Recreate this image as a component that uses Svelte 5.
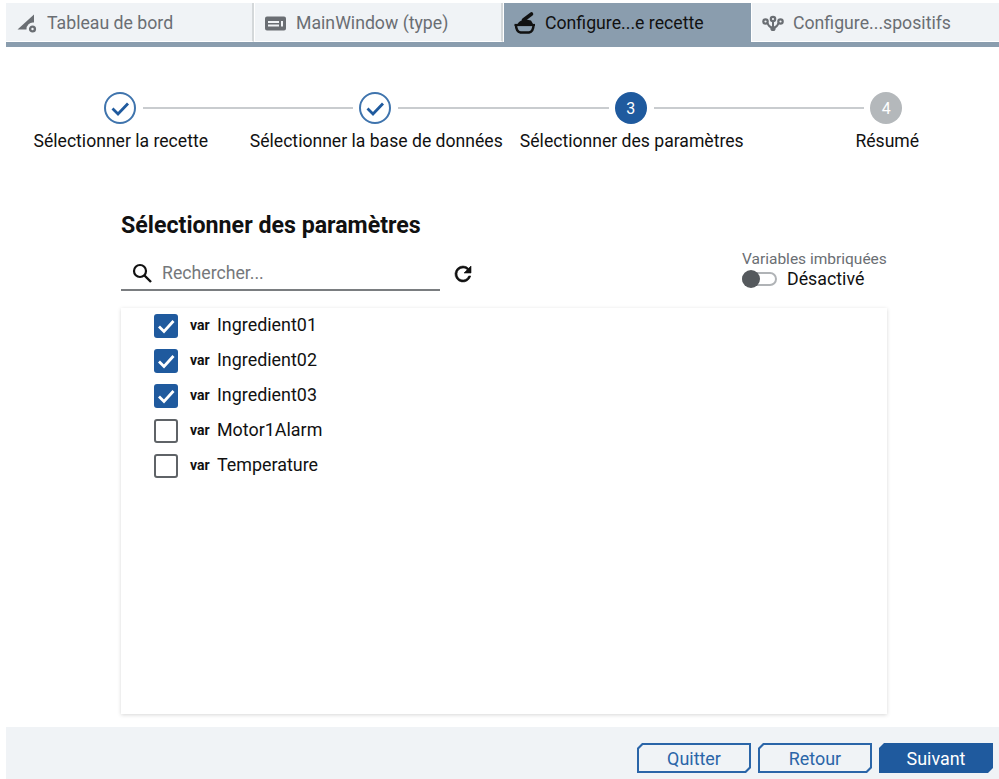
<script>
  const tabs = [
    { label: 'Tableau de bord', icon: 'dash' },
    { label: 'MainWindow (type)', icon: 'win' },
    { label: 'Configure...e recette', icon: 'bowl', active: true },
    { label: 'Configure...spositifs', icon: 'net' }
  ];
  const steps = [
    { label: 'Sélectionner la recette', state: 'done' },
    { label: 'Sélectionner la base de données', state: 'done' },
    { label: 'Sélectionner des paramètres', state: 'current', n: 3 },
    { label: 'Résumé', state: 'todo', n: 4 }
  ];
  const vars = [
    { name: 'Ingredient01', on: true },
    { name: 'Ingredient02', on: true },
    { name: 'Ingredient03', on: true },
    { name: 'Motor1Alarm', on: false },
    { name: 'Temperature', on: false }
  ];
</script>

<div class="root">
  <div class="tabs">
    {#each tabs as t}
      <div class="tab" class:active={t.active}>
        <svg class="tabicon" viewBox="0 0 24 24" width="24" height="24">
          {#if t.icon === 'dash'}
            <path d="M1.5 18.5 L18 3.5 V11.5 A6.5 6.5 0 0 0 10.5 18.5 Z" fill="currentColor" />
            <circle cx="16.5" cy="18" r="2.4" fill="none" stroke="currentColor" stroke-width="2.4" />
          {:else if t.icon === 'win'}
            <path fill-rule="evenodd" fill="currentColor" d="M2 5.5 H19 Q21 5.5 21 7.5 V17.5 Q21 19.5 19 19.5 H2 Q0 19.5 0 17.5 V7.5 Q0 5.5 2 5.5 Z M3 10 V12 H14 V10 Z M3 13.5 V15.5 H14 V13.5 Z M16 10 V15.5 H18 V10 Z" />
          {:else if t.icon === 'bowl'}
            <path d="M9.5 9 L17.5 3" stroke="currentColor" stroke-width="3.6" stroke-linecap="round" fill="none" />
            <path d="M3.5 13 Q6 8.5 12 8.5 L17 9.5 L19 13 Z" fill="currentColor" />
            <path d="M0.5 14 H21" stroke="currentColor" stroke-width="2.2" fill="none" />
            <path d="M2 14 Q2 20.5 6.5 21.5 H15 Q19.5 20.5 19.5 14" fill="none" stroke="currentColor" stroke-width="2.4" />
          {:else}
            <circle cx="11" cy="8" r="2.2" fill="none" stroke="currentColor" stroke-width="2.2" />
            <circle cx="3.5" cy="10.5" r="2.2" fill="none" stroke="currentColor" stroke-width="2.2" />
            <circle cx="18.5" cy="10.5" r="2.2" fill="none" stroke="currentColor" stroke-width="2.2" />
            <circle cx="11" cy="17.5" r="2.6" fill="currentColor" />
            <path d="M11 10 V16 M5.5 12 Q6.5 15.5 9.5 16.5 M16.5 12 Q15.5 15.5 12.5 16.5" fill="none" stroke="currentColor" stroke-width="2" />
          {/if}
        </svg>
        <span>{t.label}</span>
      </div>
    {/each}
  </div>

  <div class="stepper">
    {#each steps as s, i}
      <div class="step">
        <div class="head">
          <div class="line left" class:none={i === 0}></div>
          <div class="dot {s.state}">
            {#if s.state === 'done'}
              <svg viewBox="0 0 32 32" width="32" height="32">
                <path d="M8.5 16.5 L14 22 L24 11.5" fill="none" stroke="#1f5a9e" stroke-width="2.8" />
              </svg>
            {:else}
              {s.n}
            {/if}
          </div>
          <div class="line right" class:none={i === steps.length - 1}></div>
        </div>
        <div class="steplabel">{s.label}</div>
      </div>
    {/each}
  </div>

  <div class="content">
    <h2>Sélectionner des paramètres</h2>
    <div class="tools">
      <div class="search">
        <svg viewBox="0 0 24 24" width="24" height="24">
          <circle cx="10" cy="10" r="6" fill="none" stroke="#111" stroke-width="2.2" />
          <path d="M14.5 14.5 L21 21" stroke="#111" stroke-width="2.4" />
        </svg>
        <span>Rechercher...</span>
      </div>
      <svg class="refresh" viewBox="0 0 24 24" width="24" height="24">
        <path fill="#111" stroke="#111" stroke-width="0.6" d="M17.65 6.35A7.96 7.96 0 0 0 12 4a8 8 0 1 0 7.73 10h-2.08A6 6 0 1 1 12 6c1.66 0 3.14.69 4.22 1.78L13 11h7V4z" />
      </svg>
      <div class="nested">
        <div class="nestedtitle">Variables imbriquées</div>
        <div class="togglerow">
          <div class="toggle"><div class="knob"></div></div>
          <span>Désactivé</span>
        </div>
      </div>
    </div>

    <div class="panel">
      {#each vars as v}
        <div class="row">
          <div class="check" class:on={v.on}>
            {#if v.on}
              <svg viewBox="0 0 24 24" width="24" height="24">
                <path d="M5 12.5 L10 17.5 L19.5 7" fill="none" stroke="#fff" stroke-width="2.8" />
              </svg>
            {/if}
          </div>
          <span class="kind">var</span>
          <span class="name">{v.name}</span>
        </div>
      {/each}
    </div>
  </div>

  <div class="footer">
    <button class="btn">Quitter</button>
    <button class="btn">Retour</button>
    <button class="btn primary">Suivant</button>
  </div>
</div>

<style>
  :global(body) { background: #fff; }

  .root {
    width: 999px;
    height: 779px;
    overflow: hidden;
    display: flex;
    flex-direction: column;
    font-family: Roboto, "Liberation Sans", sans-serif;
    color: #111;
  }

  .tabs {
    display: flex;
    margin: 3px 0 0 6px;
    height: 39px;
    border-bottom: 5px solid #8a9dae;
    flex: none;
  }
  .tab {
    width: 248px;
    display: flex;
    align-items: center;
    gap: 7px;
    padding: 1px 0 0 10px;
    box-sizing: border-box;
    background: #f0f3f6;
    color: #6a6e73;
    font-size: 17.7px;
    border-right: 2px solid #d4d8da;
    border-bottom: 1px solid #fff;
    margin-right: 1px;
  }
  .tab.active {
    background: #8a9dae;
    color: #111;
    border-right: none;
    border-bottom: none;
    width: 247px;
  }
  .tab:last-child { border-right: none; margin-right: 0; width: 247px; }
  .tabicon { flex: none; }

  .stepper {
    display: grid;
    grid-template-columns: repeat(4, 255.5px);
    margin: 45px 0 0 -7.5px;
    width: 1022px;
    flex: none;
  }
  .step { display: flex; flex-direction: column; align-items: stretch; }
  .head { display: flex; align-items: center; }
  .line { flex: 1; height: 2px; background: #c9cccf; }
  .line.none { background: transparent; }
  .line.left { margin-right: 6px; }
  .line.right { margin-left: 7px; }
  .dot {
    width: 32px;
    height: 32px;
    border-radius: 50%;
    box-sizing: border-box;
    display: flex;
    align-items: center;
    justify-content: center;
    font-size: 16px;
    color: #fff;
    flex: none;
  }
  .dot.done { border: 2px solid #3f74ad; }
  .dot.done svg { margin: -2px; }
  .dot.current { background: #1f5a9e; }
  .dot.todo { background: #b4b8bb; }
  .steplabel {
    text-align: center;
    font-size: 17.6px;
    line-height: 22px;
    margin-top: 6px;
    padding-left: 1px;
    white-space: nowrap;
  }

  .content {
    margin: 59px 0 0 121px;
    width: 766px;
    flex: none;
  }
  h2 {
    margin: 0;
    font-size: 23.2px;
    line-height: 28px;
    font-weight: 700;
  }
  .tools {
    display: flex;
    align-items: flex-start;
    margin-top: 9px;
    height: 60px;
  }
  .search {
    width: 319px;
    height: 43px;
    box-sizing: border-box;
    border-bottom: 2px solid #7a7d80;
    display: flex;
    align-items: center;
    gap: 8px;
    padding: 8px 0 0 9px;
    color: #75787b;
    font-size: 17.7px;
    flex: none;
  }
  .refresh { margin: 14px 0 0 11px; flex: none; }
  .nested { margin: 2px 0 0 auto; width: 145px; }
  .nestedtitle { font-size: 15.5px; line-height: 18px; color: #6a6e73; white-space: nowrap; }
  .togglerow {
    display: flex;
    align-items: center;
    gap: 10px;
    font-size: 17.8px;
    line-height: 22px;
  }
  .toggle {
    width: 35px;
    height: 14px;
    border: 2px solid #b0b3b6;
    border-radius: 9px;
    box-sizing: border-box;
    display: flex;
    align-items: center;
  }
  .knob {
    width: 18px;
    height: 18px;
    border-radius: 50%;
    background: #55595d;
    margin-left: -2px;
    flex: none;
  }

  .panel {
    height: 406px;
    box-sizing: border-box;
    background: #fff;
    box-shadow: 0 1px 4px rgba(0, 0, 0, 0.16);
  }
  .row {
    height: 35px;
    display: flex;
    align-items: center;
    padding-left: 33px;
  }
  .check {
    width: 24px;
    height: 24px;
    box-sizing: border-box;
    border: 2px solid #5f6367;
    border-radius: 3px;
    flex: none;
    background: #fff;
  }
  .check.on { background: #1f5a9e; border: none; }
  .check svg { display: block; }
  .kind { font-size: 14px; font-weight: 700; margin: -2px 0 0 12px; width: 27px; flex: none; }
  .name { font-size: 17.9px; margin-top: -2px; }

  .footer {
    margin: auto 0 0 6px;
    height: 52px;
    background: #f0f3f6;
    display: flex;
    justify-content: flex-end;
    align-items: flex-start;
    gap: 7px;
    padding: 16px 6px 0 0;
    box-sizing: border-box;
    flex: none;
  }
  .btn {
    position: relative;
    width: 114px;
    height: 30px;
    border: none;
    background: #2a65a8;
    color: #2a65a8;
    font: 17.9px Roboto, "Liberation Sans", sans-serif;
    clip-path: polygon(5px 0, 100% 0, 100% calc(100% - 5px), calc(100% - 5px) 100%, 0 100%, 0 5px);
    padding: 0;
    isolation: isolate;
    z-index: 0;
  }
  .btn::before {
    content: '';
    position: absolute;
    inset: 2px;
    background: #f0f3f6;
    clip-path: polygon(4px 0, 100% 0, 100% calc(100% - 4px), calc(100% - 4px) 100%, 0 100%, 0 4px);
    z-index: -1;
  }
  .btn.primary { background: #1f5a9e; color: #fff; }
  .btn.primary::before { display: none; }
</style>
